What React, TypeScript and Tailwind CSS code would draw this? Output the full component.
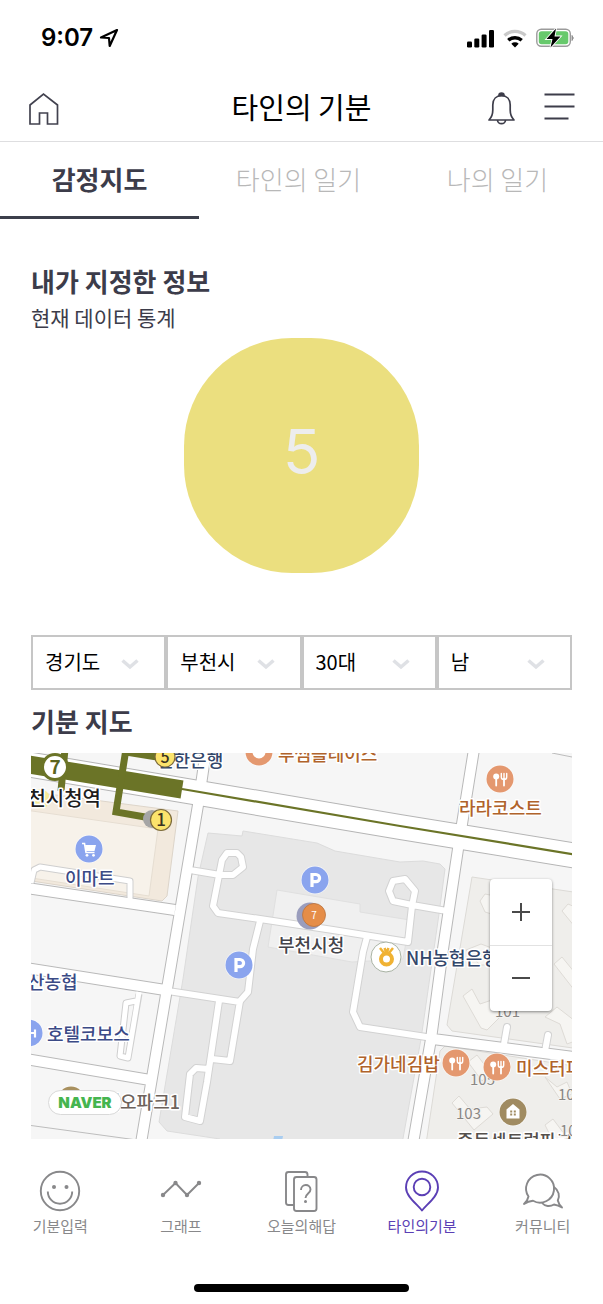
import type { ReactNode } from "react";

const REGION_FIELDS = [
  { id: "province", label: "지역", options: ["경기도"] },
  { id: "city", label: "도시", options: ["부천시"] },
  { id: "age", label: "나이대", options: ["30대"] },
  { id: "gender", label: "성별", options: ["남"] },
];

const TABS = ["감정지도", "타인의 일기", "나의 일기"];

function StatusBar() {
  return (
    <div className="flex h-[76px] items-center justify-between pl-[41px] pr-[28px]">
      <div className="flex items-center gap-[6px]">
        <span className="font-['Inter',sans-serif] text-[24px] font-semibold leading-none text-black">9:07</span>
        <svg width="20" height="20" viewBox="0 0 20 20" fill="none" stroke="#000" strokeWidth="2.2" strokeLinejoin="round">
          <path d="M18 2 L2 9.5 L10 10 L10.700 18 Z" />
        </svg>
      </div>
      <div className="flex items-center gap-[9px]">
        <svg width="27" height="19" viewBox="0 0 27 19">
          <rect x="0" y="12.500" width="5" height="6" rx="1.300" />
          <rect x="7.300" y="9.500" width="5" height="9" rx="1.300" />
          <rect x="14.600" y="5.500" width="5" height="13" rx="1.300" />
          <rect x="22" y="1" width="5" height="17.500" rx="1.300" />
        </svg>
        <svg width="24" height="19" viewBox="0 0 24 19" fill="none">
          <path d="M1.500 6.500 A15.500 15.500 0 0 1 22.500 6.500" stroke="#c9c9c9" strokeWidth="3.200" />
          <path d="M5.300 11.300 A10 10 0 0 1 18.700 11.300" stroke="#000" strokeWidth="3.400" />
          <path d="M12 18.500 L8.300 14.700 A5.500 5.500 0 0 1 15.700 14.700 Z" fill="#000" />
        </svg>
        <svg width="39" height="20" viewBox="0 0 39 20">
          <rect x="0.800" y="1.300" width="33.500" height="17" rx="4.500" fill="#fff" stroke="#9b9b9b" strokeWidth="1.400" />
          <rect x="2.800" y="3.300" width="29.500" height="13" rx="2.800" fill="#67c96c" />
          <path d="M36 7.500 a3.500 3.500 0 0 1 0 5 Z" fill="#8f8f8f" stroke="#8f8f8f" />
          <path d="M20 0.500 L10.500 11 H16.500 L14.500 19.500 L24.500 8.500 H18.500 Z" fill="#000" stroke="#fff" strokeWidth="1.800" paintOrder="stroke" />
        </svg>
      </div>
    </div>
  );
}

function Header() {
  return (
    <header className="grid h-[66px] grid-cols-[1fr_auto_1fr] items-center border-b border-[#dedee0] px-[28px]">
      <button type="button" aria-label="홈" className="justify-self-start">
        <svg width="31" height="34" viewBox="0 0 31 34" fill="none" stroke="#42424f" strokeWidth="1.700">
          <path d="M2 13 L15.500 2 L29.500 13 V32 H19.500 V21 H11.500 V32 H2 Z" />
        </svg>
      </button>
      <h1 className="pb-[6px] text-[29px] font-normal leading-[40px] text-black">타인의 기분</h1>
      <div className="flex items-center gap-[28px] justify-self-end">
        <button type="button" aria-label="알림">
          <svg width="29" height="34" viewBox="0 0 29 34" fill="none" stroke="#3d3d4a" strokeWidth="1.700" strokeLinejoin="round">
            <path d="M2 28 C5 25 5.800 22 5.800 18 V13 C5.800 7 9.500 3.700 14.500 3.700 C19.500 3.700 23.200 7 23.200 13 V18 C23.200 22 24 25 27 28 Z" />
            <path d="M12 3.500 a2.500 2.300 0 0 1 5 0 Z" fill="#3d3d4a" />
            <path d="M10.500 28 a4 3.700 0 0 0 8 0" />
          </svg>
        </button>
        <button type="button" aria-label="메뉴">
          <svg width="31" height="34" viewBox="0 0 31 34" stroke="#3d3d4a" strokeWidth="1.900">
            <path d="M0.500 2.500 H30.500 M0.500 14.500 H30.500 M0.500 26.500 H24.500" />
          </svg>
        </button>
      </div>
    </header>
  );
}

const Marker = ({ x, y, fill, children }: { x: number; y: number; fill: string; children?: ReactNode }) => (
  <g transform={`translate(${x} ${y})`}>
    <circle r="14.200" fill="#fff" opacity="0.700" />
    <circle r="13.500" fill={fill} />
    {children}
  </g>
);

const Cutlery = () => (
  <g stroke="#fff" strokeLinecap="round" fill="none">
    <circle cx="-3.800" cy="-2.500" r="3" fill="#fff" stroke="none" />
    <path d="M-3.800 0 V6.500 M4 0 V6.500" strokeWidth="1.800" />
    <path d="M1.300 -5.500 V-2 Q1.300 0.500 4 0.500 Q6.700 0.500 6.700 -2 V-5.500 M4 -5.500 V0" strokeWidth="1.400" />
  </g>
);

const ParkingMark = () => (
  <path d="M-3 7 V-5.500 H1 a3.600 3.600 0 0 1 0 7.200 H-3" fill="none" stroke="#fff" strokeWidth="3.200" />
);

const HIGHWAY = "M20 764 L205 795 L400 828 L590 859";
const STREETS =
  "M207 745 L198 806 L140 1150 M475 744 L458 850 L443 950 L431 1040 L412 1150 M20 888 L175 911 M20 968 L165 991 M20 1059 L150 1081 M433 1040 L590 1060";
const LANES =
  "M190 871 L220 876 L233 876 L243 868 L241 858 L237 854 H227 L222 861 L213 907 L218 914 L260 920 L333 931 L408 943 L412 907 L415 892 L405 880 L393 882 L389 892 L393 902 L412 906 L447 912 " +
  "M260 922 L253 950 L248 993 L240 1002 L230 1062 L212 1060 M168 992 L240 1003 M219 1002 L210 1063 L207 1083 L200 1122 L185 1118 L190 1075 L196 1069 L209 1070 " +
  "M367 938 L363 953 L353 1013 L360 1028 L433 1039 M507 1028 L504 1045 M548 1036 L545 1052";

function MoodMap() {
  return (
    <div className="relative mt-[13px] h-[386px] w-full overflow-hidden bg-[#f6f6f6]">
      <svg
        role="img"
        aria-label="부천시청 주변 지도"
        className="block h-full w-full"
        viewBox="31 754 541 386"
        preserveAspectRatio="xMidYMid slice"
        fill="none"
        fontFamily="'Noto Sans CJK KR', sans-serif"
      >
        <rect x="0" y="740" width="620" height="420" fill="#f6f6f6" />
        <g strokeWidth="1">
          <path d="M25 792 L178 812 L167 897 L162 902 L25 881 Z" fill="#f2e9dd" stroke="#ddd5ca" />
          <path d="M25 811 L158 830 L149 897 L25 878 Z" fill="#f7f2ea" stroke="#e6ded2" />
          <path d="M208 834 L242 837 L243 832 L317 844 L335 852 L400 863 L423 862 L440 865 L445 870 L439 915 L421 1040 L402 1145 H220 V1140 L167 1132 L159 1123 L183 980 L198 878 Z" fill="#e7e7e7" stroke="#dcdcdc" />
          <path d="M277 891 L360 905 V913 L410 921 L403 960 L352 963 L268 948 Z" fill="#f0f0f0" stroke="#e0e0e0" />
          <path d="M472 878 L580 894 V1050 L452 1032 L447 1026 Z" fill="#efeeeb" stroke="#dcdad6" />
          <path d="M445 1047 L580 1068 V1145 H426 L440 1052 Z" fill="#efeeeb" stroke="#dcdad6" />
        </g>
        <g fill="#f6f5f2" stroke="#dedbd6">
          <path d="M463 997 L472 990 L480 1005 L495 1000 L505 1013 L487 1031 L481 1029 Z" />
          <path d="M545 1018 L557 1008 L575 1022 V1042 L567 1045 L560 1025 Z" />
          <path d="M554 965 L562 958 L575 974 V992 Z" />
          <path d="M480 902 L485 895 L495 897 V916 L485 913 Z" />
          <path d="M562 912 L568 905 L575 908 V928 Z" />
          <path d="M466 951 L481 945 L500 952 V966 L480 966 Z" />
          <path d="M468 1063 L477 1056 L490 1073 L482 1082 Z" />
          <path d="M452 1104 L459 1097 L470 1110 L487 1108 L493 1115 L474 1131 Z" />
          <path d="M545 1078 L557 1088 L567 1083 L572 1095 L560 1100 Z" />
          <path d="M545 1126 L553 1120 L562 1132 L568 1140 H552 Z" />
        </g>
        <path d="M20 1125 L137 1141 M552 754 L572 758" stroke="#bdbdbd" />

        <g strokeLinejoin="round">
          <path d={LANES} stroke="#d2d2d2" strokeWidth="8" strokeLinecap="round" />
          <path d="M139 995 L128 1059 L120 1057 L126 1004 L136 1002 M31 884 L34 871 L40 868 L130 882 V900" stroke="#cfcfcf" strokeWidth="7" />
          <path d={STREETS} stroke="#b9b9b9" strokeWidth="12" />
          <path d={HIGHWAY} stroke="#b5b5b5" strokeWidth="26" />
          <path d={LANES} stroke="#fff" strokeWidth="6" strokeLinecap="round" />
          <path d="M139 993 L128 1059 L120 1057 L126 1004 L136 1002 M31 884 L34 871 L40 868 L130 882 V903" stroke="#fff" strokeWidth="5" />
          <path d={STREETS} stroke="#fff" strokeWidth="10" />
          <path d={HIGHWAY} stroke="#fff" strokeWidth="24" />
        </g>

        <g stroke="#6b7427">
          <path d="M182 790 L400 827 L590 858" strokeWidth="2.200" />
          <path d="M20 764 L182 790.500" strokeWidth="18" />
          <path d="M65 750 L61 792" strokeWidth="7" />
          <path d="M126 750 L116 813 L145 818 M126 753 L157 758" strokeWidth="7" />
        </g>
        <path d="M274 1137 H283 L282 1142 H273 Z" fill="#a9cdf0" />

        <circle cx="55" cy="768" r="12.500" fill="#fff" stroke="#6b7427" strokeWidth="3" />
        <circle cx="40" cy="800" r="10" fill="#f5ea9a" />

        <g fontSize="18" fontWeight="500" stroke="#fff" strokeWidth="3" strokeLinejoin="round" paintOrder="stroke">
          <g fill="#3b4a86">
            <text x="65" y="886">이마트</text>
            <text x="28" y="990">산농협</text>
            <text x="47" y="1042">호텔코보스</text>
          </g>
          <g fill="#33476b">
            <text x="157" y="768">신한은행</text>
            <text x="406" y="966">NH농협은행</text>
          </g>
          <g fill="#b0632b">
            <text x="278" y="762">투썸플레이스</text>
            <text x="459" y="816">라라코스트</text>
            <text x="357" y="1072">김가네김밥</text>
            <text x="516" y="1076">미스터피자</text>
          </g>
          <text x="278" y="953" fill="#44444a">부천시청</text>
          <text x="180" y="1110" textAnchor="end" fill="#6d625b">네오파크1</text>
          <text x="457" y="1149" fill="#55504c">중동센트럴파크</text>
          <text x="101" y="807" textAnchor="end" fontSize="20" fill="#1d1d1d">부천시청역</text>
        </g>
        <g fontSize="15" fill="#8a8784" stroke="#f4f3f1" strokeWidth="2" paintOrder="stroke">
          <text x="495" y="1018">101</text>
          <text x="470" y="1086">105</text>
          <text x="456" y="1120">103</text>
          <text x="558" y="1101">106</text>
          <text x="560" y="1137">107</text>
        </g>

        <Marker x={89} y={850} fill="#8aa4ee">
          <path d="M-7 -5.500 H-4.500 L-3 3.500 H5.500" stroke="#fff" strokeWidth="1.600" />
          <path d="M-4 -4 H7 L5.500 2 H-3 Z" fill="#fff" />
          <circle cx="-2" cy="6.300" r="1.400" fill="#fff" />
          <circle cx="4.500" cy="6.300" r="1.400" fill="#fff" />
        </Marker>
        <Marker x={315} y={881} fill="#8aa4ee"><ParkingMark /></Marker>
        <Marker x={239} y={966} fill="#8aa4ee"><ParkingMark /></Marker>
        <Marker x={29} y={1034} fill="#8aa4ee">
          <path d="M-6 0 H7 M6 -3.500 V4.500" stroke="#fff" strokeWidth="2.200" />
        </Marker>
        <Marker x={259} y={753} fill="#e4986f"><circle r="6.500" fill="#fff" /></Marker>
        <Marker x={500} y={780} fill="#e4986f"><Cutlery /></Marker>
        <Marker x={456} y={1064} fill="#e4986f"><Cutlery /></Marker>
        <Marker x={497} y={1068} fill="#e4986f"><Cutlery /></Marker>
        <Marker x={71} y={1101} fill="#a8905f" />
        <Marker x={513} y={1113} fill="#a08b61">
          <path d="M-6.500 6.500 V-2.500 L0 -8 L6.500 -2.500 V6.500 Z" fill="#fff" />
          <path d="M-2.800 -0.500 h2 M0.800 -0.500 h2 M-2.800 2.500 h2 M0.800 2.500 h2" stroke="#a08b61" strokeWidth="1.800" />
        </Marker>

        <circle cx="386" cy="958" r="15" fill="#fff" stroke="#a9b3a4" />
        <circle cx="386.500" cy="960" r="5.500" stroke="#f0b233" strokeWidth="4" />
        <path d="M380 949 l4 5 M393 949 l-4 5 M384.500 949 l2 5 M388.500 949 l-2 5" stroke="#f0b233" strokeWidth="2.500" />

        <circle cx="310" cy="917" r="13.500" fill="#9a9dbd" />
        <circle cx="314" cy="916" r="11.500" fill="#e58d48" stroke="#b9733f" strokeWidth="0.800" />

        <circle cx="152" cy="820" r="9" fill="#a5a5a5" />
        <g fill="#fbe36c" stroke="#7b6a3a" strokeWidth="1.200">
          <circle cx="165" cy="758" r="10" />
          <circle cx="161" cy="821" r="10.500" />
        </g>
        <g textAnchor="middle">
          <text x="314" y="920" fontSize="10" fill="#fff">7</text>
          <text x="165" y="764" fontSize="16" fontWeight="500" fill="#3a3320">5</text>
          <text x="161" y="827" fontSize="17" fontWeight="500" fill="#3a3320">1</text>
          <text x="55" y="775" fontSize="19" fontWeight="700" fill="#5c651e">7</text>
        </g>
      </svg>

      <div className="absolute bottom-[24px] left-[17px] flex h-[25px] w-[74px] items-center justify-center rounded-full border border-[#d9d9d9] bg-white font-['Inter',sans-serif] text-[15px] font-black leading-none text-[#45b54f]">
        NAVER
      </div>
      <div className="absolute right-[20px] top-[126px] flex h-[132px] w-[62px] flex-col divide-y divide-[#e2e2e2] rounded bg-white shadow-[0_1px_3px_rgba(0,0,0,0.45)]">
        <button type="button" aria-label="확대" className="flex flex-1 items-center justify-center">
          <svg width="20" height="20" viewBox="0 0 20 20" stroke="#4a4a4a" strokeWidth="2"><path d="M1 10 H19 M10 1 V19" /></svg>
        </button>
        <button type="button" aria-label="축소" className="flex flex-1 items-center justify-center">
          <svg width="20" height="20" viewBox="0 0 20 20" stroke="#4a4a4a" strokeWidth="2"><path d="M1 10 H19" /></svg>
        </button>
      </div>
    </div>
  );
}

const NAV_ITEMS: { label: string; active?: boolean; icon: ReactNode }[] = [
  {
    label: "기분입력",
    icon: (
      <>
        <circle cx="21" cy="21" r="19.200" />
        <path d="M8.800 21.500 a12.200 12.200 0 0 0 24.400 0" />
        <circle cx="15" cy="17" r="2" fill="currentColor" stroke="none" />
        <circle cx="27.500" cy="17" r="2" fill="currentColor" stroke="none" />
      </>
    ),
  },
  {
    label: "그래프",
    icon: (
      <>
        <path d="M3 25 L15.500 13 L27 25 L39 13" />
        <g fill="currentColor" stroke="none">
          <circle cx="3" cy="25" r="2.200" />
          <circle cx="15.500" cy="13" r="2.200" />
          <circle cx="27" cy="25" r="2.200" />
          <circle cx="39" cy="13" r="2.200" />
        </g>
      </>
    ),
  },
  {
    label: "오늘의해답",
    icon: (
      <>
        <path d="M14 35 H8.500 a2.500 2.500 0 0 1 -2.500 -2.500 V4.500 a2.500 2.500 0 0 1 2.500 -2.500 H25 a2.500 2.500 0 0 1 2.500 2.500 V7" />
        <rect x="14" y="7" width="22.500" height="34" rx="2.500" />
        <path d="M21 20 C21 13.500 30.500 13.500 30.500 19.500 C30.500 23.500 25.500 23.500 25.500 28" />
        <circle cx="25.500" cy="31.500" r="1.500" fill="currentColor" stroke="none" />
      </>
    ),
  },
  {
    label: "타인의기분",
    active: true,
    icon: (
      <>
        <path d="M21 40.500 C16 34 5 26.500 5 17.500 a16 16 0 0 1 32 0 C37 26.500 26 34 21 40.500 Z" />
        <circle cx="21" cy="17" r="8.300" />
      </>
    ),
  },
  {
    label: "커뮤니티",
    icon: (
      <>
        <path d="M6.500 26.500 A14 14 0 1 1 11 30.700 C8 31 5 32 2 34 C4.500 31.500 6 29.500 6.500 26.500 Z" />
        <path d="M32 17 C37 20.500 38 26 35.800 30.500 C36.500 33.500 38 35.500 40 37.500 C37.500 36 35 35 32 34.500 C28 37 23 36.500 20 33" />
      </>
    ),
  },
];

function BottomNav() {
  return (
    <nav className="grid grid-cols-5 pt-[31px]">
      {NAV_ITEMS.map((item) => (
        <a
          key={item.label}
          href="#"
          className={`flex flex-col items-center gap-[3px] ${item.active ? "text-[#5b3fb5]" : "text-[#88888a]"}`}
        >
          <svg width="42" height="42" viewBox="0 0 42 42" fill="none" stroke="currentColor" strokeWidth="1.900" strokeLinejoin="round">
            {item.icon}
          </svg>
          <span className="whitespace-nowrap text-[15px] leading-[22px]">{item.label}</span>
        </a>
      ))}
    </nav>
  );
}

export default function App() {
  return (
    <div className="flex min-h-screen flex-col bg-white font-['Noto_Sans_CJK_KR',sans-serif] text-[#3c3c4a]">
      <StatusBar />
      <Header />
      <div className="flex h-[77px]" role="tablist">
        {TABS.map((tab, i) => (
          <button
            key={tab}
            type="button"
            role="tab"
            aria-selected={i === 0}
            className={
              i === 0
                ? "w-[33%] border-b-3 border-[#3c3f4b] text-[26px] font-bold leading-[38px] text-[#3c3c4a]"
                : "w-[33%] border-b-3 border-transparent text-[26px] font-light leading-[38px] text-[#b8b8b8]"
            }
          >
            {tab}
          </button>
        ))}
      </div>
      <main className="px-[31px] pt-[43px]">
        <h2 className="text-[26px] font-bold leading-[38px]">내가 지정한 정보</h2>
        <p className="text-[21px] leading-[34px]">현재 데이터 통계</p>
        <div className="mx-auto mt-1 flex h-[235px] w-[235px] items-center justify-center rounded-[108px] bg-[#ebdf7f] pb-[8px] font-['Inter',sans-serif] text-[62px] font-normal leading-none text-[#ededed]">
          5
        </div>
        <div className="mt-[62px] grid grid-cols-4">
          {REGION_FIELDS.map((field) => (
            <div key={field.id} className="relative">
              <label htmlFor={field.id} className="sr-only">{field.label}</label>
              <select
                id={field.id}
                className="block h-[55px] w-full appearance-none border-2 border-[#c6c6c6] bg-white pb-[2px] pl-[12px] pr-[40px] text-[20px] leading-[30px] text-black"
              >
                {field.options.map((option) => (
                  <option key={option}>{option}</option>
                ))}
              </select>
              <svg className="pointer-events-none absolute right-[27px] top-[24px]" width="18" height="11" viewBox="0 0 18 11" fill="none" stroke="#dfe1e5" strokeWidth="3.500">
                <path d="M1.500 1.500 L9 8 L16.500 1.500" />
              </svg>
            </div>
          ))}
        </div>
        <h2 className="mt-[12px] text-[26px] font-bold leading-[38px]">기분 지도</h2>
        <MoodMap />
      </main>
      <BottomNav />
      <div className="mx-auto mb-[12px] mt-auto h-[8px] w-[215px] rounded-full bg-black" />
    </div>
  );
}
